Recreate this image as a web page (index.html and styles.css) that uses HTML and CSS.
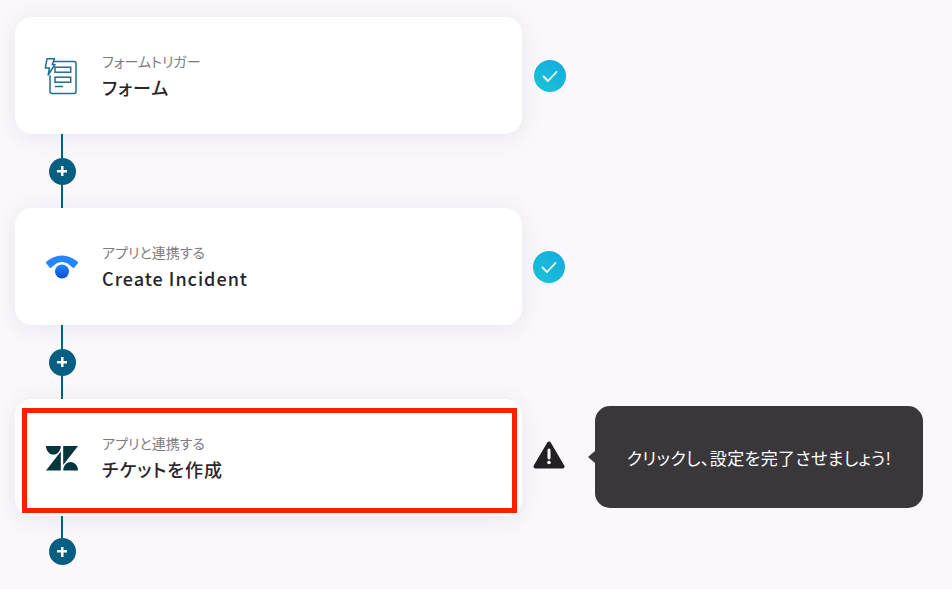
FILE: index.html
```html
<!DOCTYPE html>
<html lang="ja">
<head>
<meta charset="utf-8">
<title>フロー</title>
<link rel="stylesheet" href="styles.css">
</head>
<body>
<main class="flow">
  <section class="step">
    <div class="step-row">
      <article class="card">
        <svg class="app-icon" viewBox="0 0 36 36" fill="none" stroke="#1f6f8f" stroke-width="1.500">
          <path d="M9 3.500h21a2 2 0 0 1 2 2v28a2 2 0 0 1-2 2h-22a2 2 0 0 1-2-2v-16"/>
          <rect x="11" y="9.200" width="15.700" height="5"/>
          <rect x="11" y="19.200" width="15.700" height="5"/>
          <path d="M11 28.500h8"/>
          <path d="M3 .8h7.500L8.200 6.500h2.800L4.200 17l1.300-7H1.300z" fill="#fff" stroke-linejoin="round"/>
        </svg>
        <div class="labels">
          <span class="kind">フォームトリガー</span>
          <strong class="title">フォーム</strong>
        </div>
      </article>
      <svg class="check" viewBox="0 0 32 32">
        <defs><linearGradient id="chk" x1="0" y1="1" x2="1" y2="0"><stop offset="0" stop-color="#18c6d6"/><stop offset="1" stop-color="#16a9e0"/></linearGradient></defs>
        <circle cx="16" cy="16" r="16" fill="url(#chk)"/>
        <path d="M9.500 16.500l4.500 4.500 8.500-9" fill="none" stroke="#fff" stroke-width="1.800" stroke-linecap="round" stroke-linejoin="round"/>
      </svg>
    </div>
    <div class="connector"><span class="plus"></span></div>
  </section>

  <section class="step">
    <div class="step-row">
      <article class="card">
        <svg class="app-icon" viewBox="0 0 36 36">
          <defs><linearGradient id="sp" x1="0" y1="0" x2="0" y2="1"><stop offset="0" stop-color="#2684ff"/><stop offset="1" stop-color="#0052cc"/></linearGradient></defs>
          <path d="M2.300 12.800C6.800 8.800 12 6.500 18 6.500s11.200 2.300 15.700 6.300c.5.400.5 1.100.1 1.500l-3.400 4.300c-.4.500-1 .5-1.500.1C25.700 16 22.300 13 18 13s-7.700 3-10.900 5.700c-.5.400-1.100.4-1.500-.1l-3.400-4.300c-.4-.4-.4-1.100.1-1.500z" fill="#2684ff"/>
          <circle cx="18" cy="22.500" r="7" fill="url(#sp)"/>
        </svg>
        <div class="labels">
          <span class="kind">アプリと連携する</span>
          <strong class="title">Create Incident</strong>
        </div>
      </article>
      <svg class="check check-second" viewBox="0 0 32 32">
        <circle cx="16" cy="16" r="16" fill="url(#chk)"/>
        <path d="M9.500 16.500l4.500 4.500 8.500-9" fill="none" stroke="#fff" stroke-width="1.800" stroke-linecap="round" stroke-linejoin="round"/>
      </svg>
    </div>
    <div class="connector"><span class="plus"></span></div>
  </section>

  <section class="step">
    <div class="step-row">
      <article class="card">
        <svg class="app-icon" viewBox="0 0 36 36" fill="#03363d">
          <path d="M2 6h14.800C16.800 10.800 13.500 14.600 9.400 14.600S2 10.800 2 6z"/>
          <path d="M16.800 11.500v19H2z"/>
          <path d="M19.200 30.500c0-4.800 3.300-8.600 7.400-8.600S34 25.700 34 30.500z"/>
          <path d="M19.200 25V6H34z"/>
        </svg>
        <div class="labels">
          <span class="kind">アプリと連携する</span>
          <strong class="title">チケットを作成</strong>
        </div>
        <div class="highlight"></div>
      </article>
      <svg class="warning" viewBox="0 0 32 30">
        <path d="M16 3.500L29.500 26.500H2.500z" fill="#222025" stroke="#222025" stroke-width="4" stroke-linejoin="round"/>
        <path d="M16 10v8" stroke="#fff" stroke-width="3" stroke-linecap="round"/>
        <circle cx="16" cy="22.500" r="1.800" fill="#fff"/>
      </svg>
      <div class="tooltip">クリックし、設定を完了させましょう!</div>
    </div>
    <div class="connector connector-last"><span class="plus"></span></div>
  </section>
</main>
</body>
</html>
```

FILE: styles.css
```css
html, body {
  margin: 0;
  height: 100%;
  overflow: hidden;
  background: #faf8fc;
}

body {
  font-family: "Noto Sans CJK JP", "Noto Sans", sans-serif;
  font-feature-settings: "palt";
  color: #27262b;
}

.flow {
  display: flex;
  flex-direction: column;
  padding: 17px 0 0 15px;
}

.step-row {
  display: flex;
  align-items: center;
}

.card {
  position: relative;
  box-sizing: border-box;
  flex: none;
  display: flex;
  align-items: center;
  width: 507px;
  height: 117px;
  padding: 0 0 0 29px;
  gap: 21px;
  background: #fff;
  border-radius: 17px;
  box-shadow: 0 3px 24px rgba(60, 50, 90, 0.09);
}

.app-icon {
  flex: none;
  width: 36px;
  height: 36px;
  overflow: visible;
}

.labels {
  display: flex;
  flex-direction: column;
  gap: 3px;
  padding-left: 1px;
}

.kind {
  font-size: 14px;
  line-height: 19px;
  color: #7d7b80;
}

.title {
  font-size: 18px;
  line-height: 26px;
  font-weight: 500;
  letter-spacing: 1px;
}

.check {
  flex: none;
  width: 32px;
  height: 32px;
  margin-left: 12px;
}

.check-second {
  margin-left: 11px;
}

.warning {
  flex: none;
  width: 32px;
  height: 30px;
  margin: 0 0 6px 11px;
}

.highlight {
  position: absolute;
  left: 7px;
  top: 9px;
  right: 5px;
  bottom: 3px;
  border: 5px solid #ff1e00;
  pointer-events: none;
}

.tooltip {
  position: relative;
  box-sizing: border-box;
  display: flex;
  align-items: center;
  justify-content: center;
  flex: none;
  width: 328px;
  height: 102px;
  margin: 0 0 1px 30px;
  background: #3a373b;
  border-radius: 15px;
  color: #fff;
  font-size: 17px;
  letter-spacing: 0.4px;
}

.tooltip::before {
  content: "";
  position: absolute;
  left: -7px;
  top: 50%;
  margin-top: -6px;
  border-style: solid;
  border-width: 6px 7px 6px 0;
  border-color: transparent #3a373b transparent transparent;
}

.connector {
  position: relative;
  display: flex;
  align-items: center;
  justify-content: flex-start;
  height: 74px;
  margin-left: 46px;
  width: 2px;
  background: #065f83;
}

.connector-last {
  height: 25px;
  overflow: visible;
}

.plus {
  position: relative;
  flex: none;
  width: 27px;
  height: 27px;
  margin-left: -12.5px;
  border-radius: 50%;
  background:
    linear-gradient(#fff, #fff) center / 10px 2.5px no-repeat,
    linear-gradient(#fff, #fff) center / 2.5px 10px no-repeat,
    #065f83;
}

.connector-last .plus {
  top: 23px;
}
```
